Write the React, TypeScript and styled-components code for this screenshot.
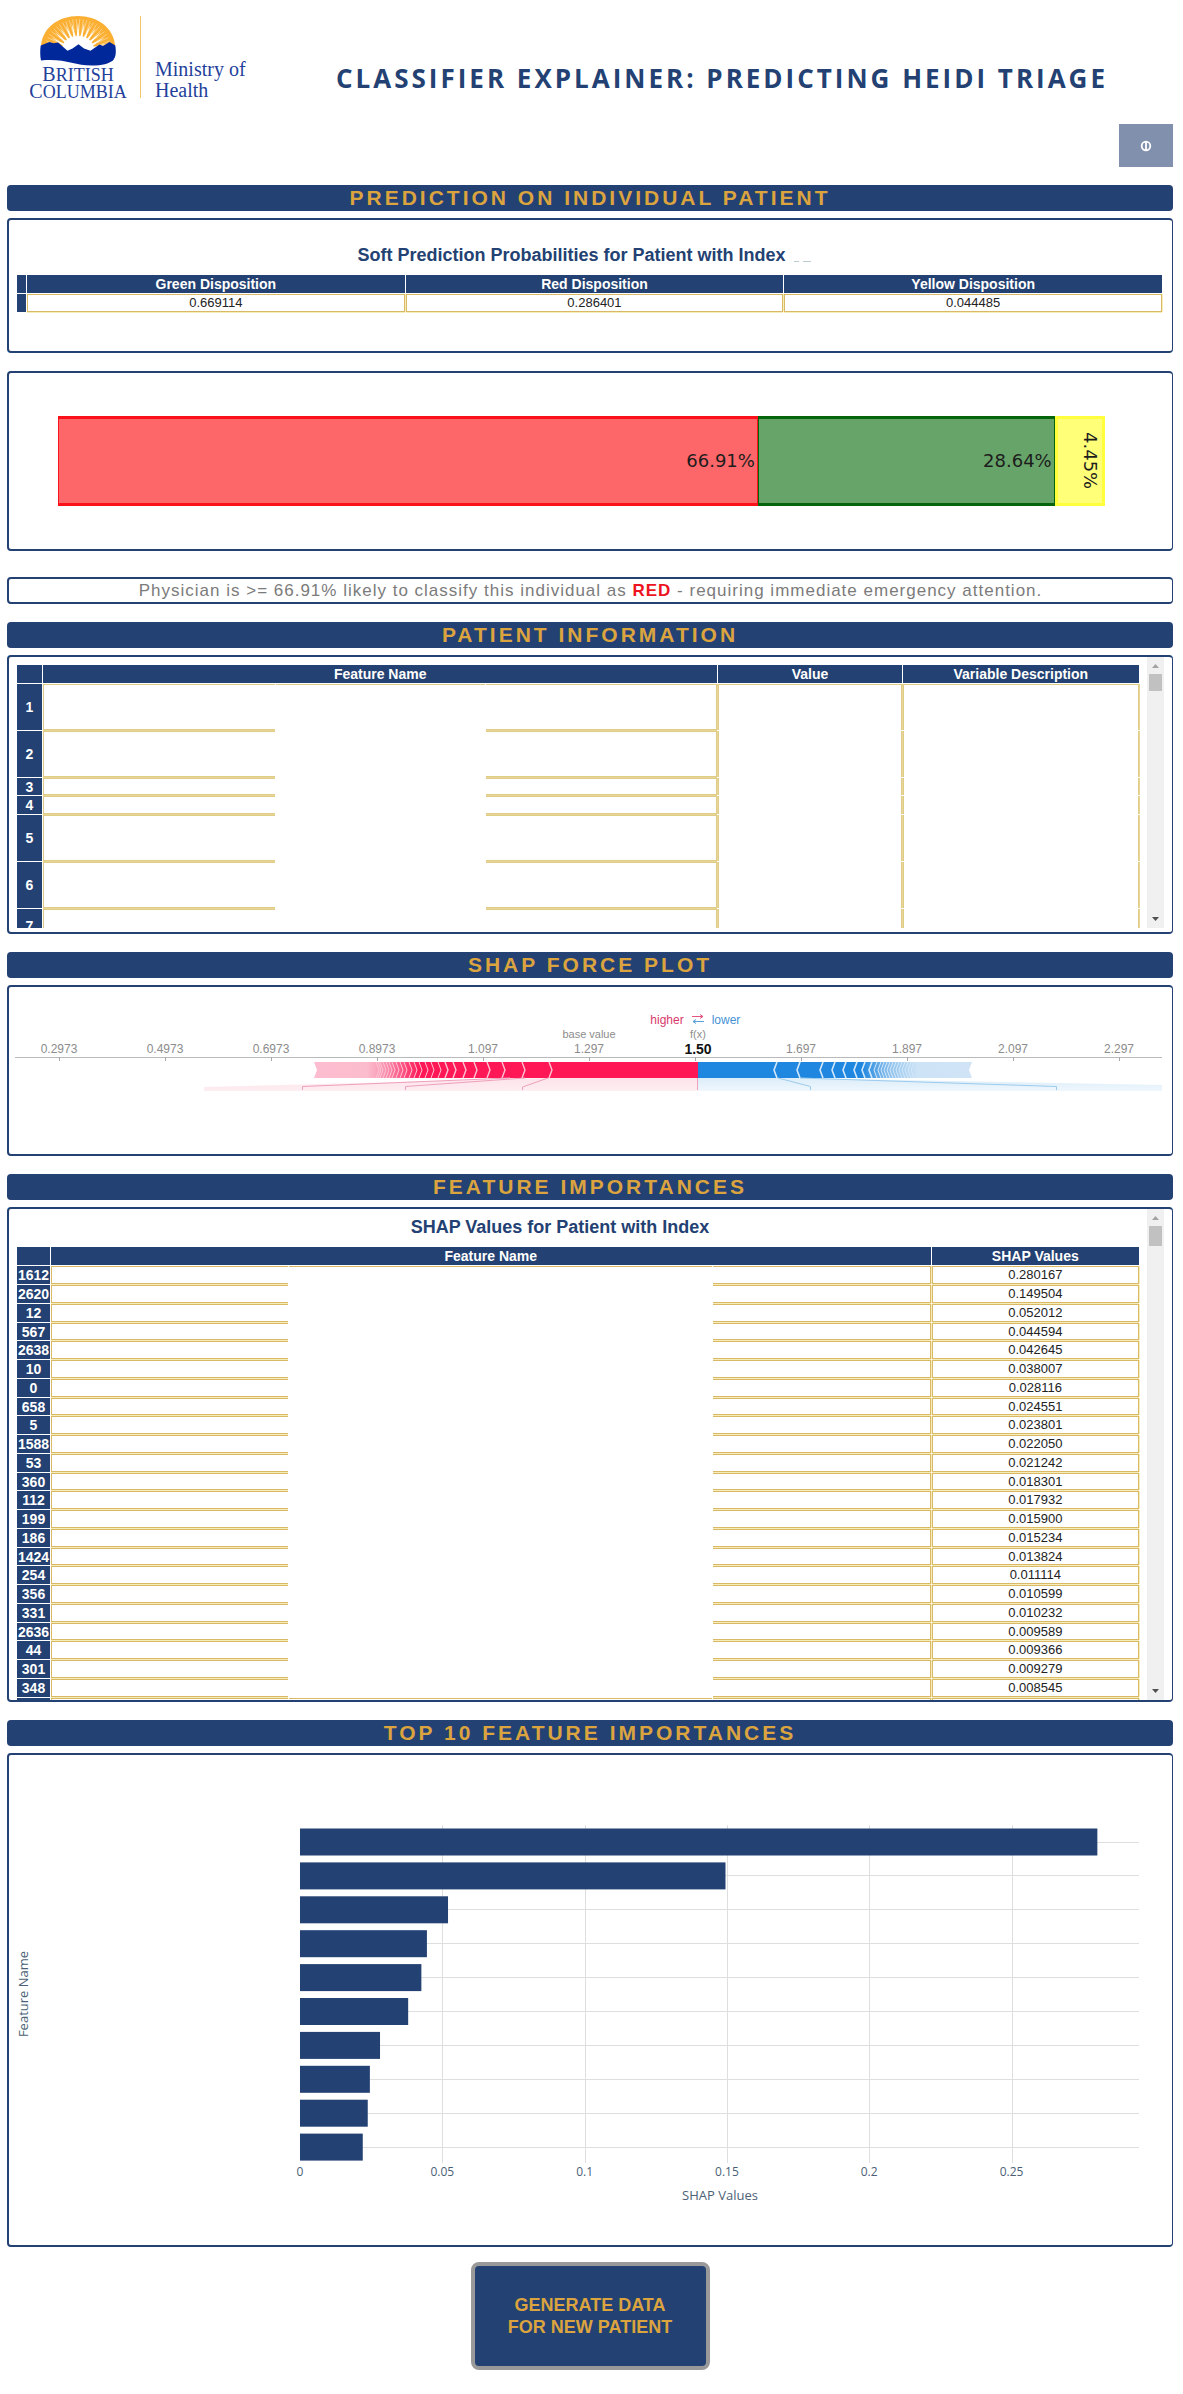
import React from "react";
import styled, { createGlobalStyle } from "styled-components";

const navy = "#234172";
const gold = "#dba43f";
const sans = '"Liberation Sans", Arial, sans-serif';
const open = '"Open Sans", sans-serif';

const GlobalStyle = createGlobalStyle`
  *, *::before, *::after { box-sizing: border-box; }
  body { margin: 0; background: #fff; font-family: ${sans}; }
`;

const Page = styled.div`
  padding: 0 10px 24px 7px;
`;

const Header = styled.header`
  display: flex;
  align-items: flex-start;
  height: 124px;
  padding: 16px 65px 0 23px;
`;

const Logo = styled.svg`
  flex: none;
  width: 220px;
  height: 84px;
  overflow: visible;
`;

const Title = styled.h1`
  flex: 1;
  margin: 44px 0 0;
  text-align: right;
  white-space: nowrap;
  color: ${navy};
  font: 700 26px/36px ${open};
  letter-spacing: 3px;
`;

const Toolbar = styled.div`
  display: flex;
  justify-content: flex-end;
  margin-bottom: 18px;
`;

const HelpButton = styled.button`
  display: flex;
  align-items: center;
  justify-content: center;
  width: 54px;
  height: 43px;
  padding: 0;
  border: 0;
  background: #8090ad;
`;

const Section = styled.section`
  display: flex;
  flex-direction: column;
  margin-bottom: 18px;
`;

const Banner = styled.h2`
  margin: 0 0 7px;
  border-radius: 4px;
  background: ${navy};
  color: ${gold};
  text-align: center;
  font: 700 21px/26px ${sans};
  letter-spacing: 3px;
`;

const Panel = styled.div<{ $h?: number; $gap?: number }>`
  display: flex;
  flex-direction: column;
  height: ${(p) => (p.$h ? `${p.$h}px` : "auto")};
  margin-bottom: ${(p) => p.$gap ?? 0}px;
  border: 2px solid ${navy};
  border-right-width: 1px;
  border-radius: 4px;
  background: #fff;
`;

const TablePanel = styled(Panel)`
  padding: 0 9px 0 7px;
`;

const ScrollPanel = styled(Panel)<{ $bottom: number }>`
  flex-direction: row;
  padding: 0 8px ${(p) => p.$bottom}px 7px;
`;

const ScrollBody = styled.div<{ $top: number }>`
  flex: 1;
  overflow: hidden;
  padding-top: ${(p) => p.$top}px;
  margin-right: 7px;
`;

const TableTitle = styled.h3<{ $top: number; $bottom: number }>`
  display: flex;
  justify-content: center;
  gap: 8px;
  margin: 0;
  padding: ${(p) => p.$top}px 0 ${(p) => p.$bottom}px;
  color: ${navy};
  font: 700 18px/20px ${sans};
`;

const IndexSlot = styled.span`
  display: flex;
  align-items: flex-end;
  gap: 4px;
  width: 28px;
  padding-bottom: 3px;
`;

const Dash = styled.i<{ $w: number }>`
  width: ${(p) => p.$w}px;
  height: 1px;
  background: #bccad2;
`;

const Table = styled.table<{ $rule?: string; $gap?: string }>`
  --rule: ${(p) => p.$rule ?? "#d9b866"};
  --gap: ${(p) => p.$gap ?? "#f6edbb"};
  width: 100%;
  table-layout: fixed;
  border-collapse: separate;
  border-spacing: 1px;
  font-family: ${sans};
`;

const Col = styled.col<{ $w?: string }>`
  width: ${(p) => p.$w ?? "auto"};
`;

const Head = styled.th`
  height: 18px;
  padding: 0;
  background: ${navy};
  color: #fff;
  text-align: center;
  font: 700 14px/18px ${sans};
`;

const Row = styled.tr<{ $h: number }>`
  height: ${(p) => p.$h}px;
`;

const Index = styled.th`
  padding: 0;
  background: ${navy};
  color: #fff;
  text-align: center;
  font: 700 14px/14px ${sans};
`;

const Cell = styled.td`
  padding: 0;
  border: 1px solid var(--rule);
  box-shadow: 0 1px 0 var(--gap), 1px 0 0 var(--gap);
  color: #222;
  text-align: center;
  font: 400 13px/14px ${sans};
`;

const Start = styled(Cell)`
  border-right: 0;
  box-shadow: 0 1px 0 var(--gap);
`;

const Blank = styled.td<{ $first?: boolean }>`
  padding: 0;
  border-top: ${(p) => (p.$first ? "1px solid var(--rule)" : "0")};
`;

const End = styled(Cell)`
  border-left: 0;
`;

const Side = styled(Cell)<{ $first?: boolean }>`
  border-bottom: 0;
  border-top-width: ${(p) => (p.$first ? 1 : 0)}px;
  box-shadow: 1px 0 0 var(--gap);
`;

const Bar = styled.div`
  display: flex;
  flex-direction: column;
  align-items: center;
  justify-content: space-between;
  width: 17px;
  padding: 7px 0;
  background: #f0f0f0;
`;

const BarTop = styled.div`
  display: flex;
  flex-direction: column;
  align-items: center;
  gap: 6px;
`;

const Arrow = styled.svg`
  display: block;
  width: 7px;
  height: 4px;
`;

const Thumb = styled.div<{ $h: number }>`
  width: 13px;
  height: ${(p) => p.$h}px;
  background: #c1c1c1;
`;

const Stack = styled.div`
  display: flex;
  flex: 1;
  margin: 43px 67px 43px 49px;
`;

const Segment = styled.div<{ $share: number; $fill: string; $edge: string; $x: number }>`
  display: flex;
  flex: ${(p) => p.$share} 1 0;
  align-items: center;
  justify-content: flex-end;
  padding-right: 2px;
  border: solid ${(p) => p.$edge};
  border-width: 3px ${(p) => p.$x}px;
  background: ${(p) => p.$fill};
  color: #1d1d1d;
  font: 400 18px/20px "DejaVu Sans", sans-serif;
`;

const Vertical = styled.span`
  writing-mode: vertical-rl;
`;

const Verdict = styled.p`
  margin: 0;
  padding-top: 1px;
  color: #7b7b7b;
  text-align: center;
  font: 400 17px/22px ${sans};
  letter-spacing: 1px;
`;

const Red = styled.strong`
  color: #ee1320;
`;

const Chart = styled.svg`
  display: block;
  width: 100%;
  height: auto;
`;

const Actions = styled.div`
  display: flex;
  justify-content: center;
  margin-top: -3px;
`;

const Generate = styled.button`
  width: 239px;
  height: 108px;
  border: 4px solid #999;
  border-radius: 8px;
  background: ${navy};
  color: ${gold};
  font: 700 18px/22px ${sans};
`;

const ray = (deg: number, r: number) => {
  const a = (deg * Math.PI) / 180;
  return `${(48 + r * Math.cos(a)).toFixed(1)} ${(37 - r * Math.sin(a)).toFixed(1)}`;
};

function BCLogo() {
  const rays = Array.from({ length: 15 }, (_, i) => 6 + i * 12);
  return (
    <Logo viewBox="0 0 220 84" role="img" aria-label="British Columbia Ministry of Health">
      <path d="M11 29C13 11 29 0 48 0s35 11 37 29L64 34H31Z" fill="#fbb034" />
      {rays.map((d) => (
        <path
          key={d}
          d={`M${ray(d - 4.5, 16)}L${ray(d, 31)}L${ray(d + 4.5, 16)}Z`}
          fill="#fff"
        />
      ))}
      {rays.map((d) => (
        <path
          key={d}
          d={`M${ray(d - 2, 22)}L${ray(d - 3, 34)}M${ray(d + 2, 22)}L${ray(d + 3, 34)}`}
          stroke="#fff"
          strokeWidth="0.4"
        />
      ))}
      <path d="M31 37C32 25 39 20 48 20s16 5 17 17Z" fill="#fff" />
      <path
        d="M10.700 29.500L19.500 26 23.500 27.300 28 26.500 37.500 34.700 42.500 32.500 48.500 28.300 54 32.500 60.500 34.700 69.500 28.500 73 30 79.500 26 85.300 29.500C86.300 36 86 41 83 44.500 79 47.500 72 49.500 62 49.500 44 49.500 34 42 11 44.500 10 40 10 34 10.700 29.500Z"
        fill="#00289b"
      />
      <g fill="#233f9b" fontFamily='"Liberation Serif", serif' textAnchor="middle">
        <text x="48" y="65" fontSize="20">B<tspan fontSize="18">RITISH</tspan></text>
        <text x="48" y="82" fontSize="20">C<tspan fontSize="18">OLUMBIA</tspan></text>
      </g>
      <path d="M110.500 0V82" stroke="#f3c566" strokeWidth="1" />
      <g fill="#233f9b" fontFamily='"Liberation Serif", serif' fontSize="20">
        <text x="125" y="60">Ministry of</text>
        <text x="125" y="81">Health</text>
      </g>
    </Logo>
  );
}

function Scrollbar({ thumb }: { thumb: number }) {
  return (
    <Bar aria-hidden="true">
      <BarTop>
        <Arrow viewBox="0 0 7 4"><path d="M0 4L3.500 0 7 4Z" fill="#a3a3a3" /></Arrow>
        <Thumb $h={thumb} />
      </BarTop>
      <Arrow viewBox="0 0 7 4"><path d="M0 0L3.500 4 7 0Z" fill="#505050" /></Arrow>
    </Bar>
  );
}

const patientRows = [46, 46, 17, 18, 46, 46, 34];

const shapRows: [string, string][] = [
  ["1612", "0.280167"], ["2620", "0.149504"], ["12", "0.052012"], ["567", "0.044594"],
  ["2638", "0.042645"], ["10", "0.038007"], ["0", "0.028116"], ["658", "0.024551"],
  ["5", "0.023801"], ["1588", "0.022050"], ["53", "0.021242"], ["360", "0.018301"],
  ["112", "0.017932"], ["199", "0.015900"], ["186", "0.015234"], ["1424", "0.013824"],
  ["254", "0.011114"], ["356", "0.010599"], ["331", "0.010232"], ["2636", "0.009589"],
  ["44", "0.009366"], ["301", "0.009279"], ["348", "0.008545"],
];

const ticks = ["0.2973", "0.4973", "0.6973", "0.8973", "1.097", "1.297", "", "1.697", "1.897", "2.097", "2.297"];
const redTips = [552, 525, 505, 490, 477, 466, 456, 448, 441, 434, 428, 422, 417, 412, 407, 403, 399, 395, 392, 389, 386, 383, 381, 379];
const blueTips = [773, 796, 819, 831, 842, 853, 861, 868, 873, 877, 880, 883, 886, 889, 892, 895, 898, 901, 904, 907, 910];

function ForcePlot() {
  return (
    <Chart viewBox="9 987 1163 167" role="img" aria-label="SHAP force plot">
      <defs>
        <linearGradient id="redBar" gradientUnits="userSpaceOnUse" x1="314" x2="420" y1="0" y2="0">
          <stop offset="0" stopColor="#fdbdd0" />
          <stop offset="0.5" stopColor="#fbbccd" />
          <stop offset="0.68" stopColor="#f98fae" />
          <stop offset="1" stopColor="#ff1756" />
        </linearGradient>
        <linearGradient id="blueBar" gradientUnits="userSpaceOnUse" x1="862" x2="972" y1="0" y2="0">
          <stop offset="0" stopColor="#1f87e0" />
          <stop offset="0.25" stopColor="#8fc1ec" />
          <stop offset="0.5" stopColor="#cde3f6" />
          <stop offset="1" stopColor="#d0e4f6" />
        </linearGradient>
        <linearGradient id="redFade" x1="0" x2="0" y1="0" y2="1">
          <stop offset="0" stopColor="#fde3ea" />
          <stop offset="1" stopColor="#fdeef2" />
        </linearGradient>
        <linearGradient id="blueFade" x1="0" x2="0" y1="0" y2="1">
          <stop offset="0" stopColor="#dcedf9" />
          <stop offset="1" stopColor="#eff7fd" />
        </linearGradient>
      </defs>
      <g fontFamily={sans} fontSize="12" textAnchor="middle" fill="#8c8c8c">
        <text x="667" y="1024" fill="#d9386b" fontSize="12">higher</text>
        <text x="726" y="1024" fill="#4592d4" fontSize="12">lower</text>
        <text x="589" y="1038" fontSize="11">base value</text>
        <text x="698" y="1038" fontSize="11">f(x)</text>
        {ticks.map((t, i) => (
          <text key={i} x={59 + i * 106} y="1053">{t}</text>
        ))}
        <text x="698" y="1054" fill="#111" fontSize="14" fontWeight="700">1.50</text>
      </g>
      <path d="M692 1016.500H703M700 1014.500L703 1016.500 700 1018.500" stroke="#e2557f" fill="none" />
      <path d="M704 1021.500H693M696 1019.500L693 1021.500 696 1023.500" stroke="#5ba0d8" fill="none" />
      <path d="M15 1057.500H1162" stroke="#b9b9b9" />
      {ticks.map((_, i) => (
        <path key={i} d={`M${59.5 + i * 106} 1057V1061`} stroke="#aaa" />
      ))}
      <path d="M204 1087L545 1078H698V1091H204Z" fill="url(#redFade)" />
      <path d="M698 1078H790L1162 1085V1091H698Z" fill="url(#blueFade)" />
      <path d="M314 1062H698V1078H314L317 1070Z" fill="url(#redBar)" />
      <path d="M698 1062H972L969 1070 972 1078H698Z" fill="url(#blueBar)" />
      <g fill="none" stroke="#fdc3d3">
        {redTips.map((x, i) => (
          <path key={x} d={`M${x - 3} 1062L${x} 1070L${x - 3} 1078`} strokeWidth={i < 8 ? 1.4 : 1} />
        ))}
      </g>
      <g fill="none" stroke="#d3e8fa">
        {blueTips.map((x, i) => (
          <path key={x} d={`M${x + 4} 1062L${x + 1} 1070L${x + 4} 1078`} strokeWidth={i < 8 ? 1.6 : 1} />
        ))}
      </g>
      <g fill="none" stroke="#efa0bb" strokeWidth="1">
        <path d="M510 1078L302.500 1086.500V1090" />
        <path d="M525 1078L405.500 1086.500V1090" />
        <path d="M548 1078L522.500 1087V1090" />
        <path d="M697.500 1078V1090" />
      </g>
      <g fill="none" stroke="#9bcbec" strokeWidth="1">
        <path d="M778 1078L810.500 1086.500V1090" />
        <path d="M800 1078L1056.500 1086.500V1090" />
      </g>
    </Chart>
  );
}

const top10 = [0.280167, 0.149504, 0.052012, 0.044594, 0.042645, 0.038007, 0.028116, 0.024551, 0.023801, 0.02205];

function ImportanceChart() {
  const scale = 2846;
  const y = (i: number) => 1828.5 + i * 33.9;
  return (
    <Chart viewBox="9 1755 1163 490" role="img" aria-label="Top 10 feature importances">
      <g stroke="#dedede">
        {[0.05, 0.1, 0.15, 0.2, 0.25].map((v) => (
          <path key={v} d={`M${Math.round(300 + v * scale) + 0.5} 1825V2163`} />
        ))}
        {top10.map((v, i) => (
          <path key={v} d={`M300 ${Math.round(y(i) + 13) + 0.5}H1139`} />
        ))}
      </g>
      {top10.map((v, i) => (
        <rect key={v} x="300" y={y(i)} width={v * scale} height="27" fill={navy} />
      ))}
      <g fontFamily={open} fill="#4b5f76" textAnchor="middle">
        {["0", "0.05", "0.1", "0.15", "0.2", "0.25"].map((t) => (
          <text key={t} x={300 + Number(t) * scale} y="2176" fontSize="12">{t}</text>
        ))}
        <text x="720" y="2200" fontSize="13">SHAP Values</text>
        <text transform="translate(28 1994) rotate(-90)" fontSize="13">Feature Name</text>
      </g>
    </Chart>
  );
}

export default function App() {
  return (
    <Page>
      <GlobalStyle />
      <Header>
        <BCLogo />
        <Title>CLASSIFIER EXPLAINER: PREDICTING HEIDI TRIAGE</Title>
      </Header>
      <Toolbar>
        <HelpButton type="button" aria-label="Information">
          <svg width="12" height="12" viewBox="0 0 12 12" fill="none" stroke="#fff" strokeWidth="1.800">
            <circle cx="6" cy="6" r="4.300" />
            <path d="M6 2V10" />
          </svg>
        </HelpButton>
      </Toolbar>

      <Section>
        <Banner>PREDICTION ON INDIVIDUAL PATIENT</Banner>
        <TablePanel $h={135} $gap={18}>
          <TableTitle $top={25} $bottom={9}>
            Soft Prediction Probabilities for Patient with Index
            <IndexSlot><Dash $w={5} /><Dash $w={8} /></IndexSlot>
          </TableTitle>
          <Table>
            <colgroup><Col $w="9px" /><Col /><Col /><Col /></colgroup>
            <thead>
              <tr>
                <Head />
                <Head scope="col">Green Disposition</Head>
                <Head scope="col">Red Disposition</Head>
                <Head scope="col">Yellow Disposition</Head>
              </tr>
            </thead>
            <tbody>
              <Row $h={18}>
                <Index />
                <Cell>0.669114</Cell>
                <Cell>0.286401</Cell>
                <Cell>0.044485</Cell>
              </Row>
            </tbody>
          </Table>
        </TablePanel>
        <Panel $h={180} $gap={26}>
          <Stack>
            <Segment $share={675} $fill="#fe6769" $edge="#fb1119" $x={1}>66.91%</Segment>
            <Segment $share={284} $fill="#67a469" $edge="#04650d" $x={1}>28.64%</Segment>
            <Segment $share={41} $fill="#ffff78" $edge="#ffff3d" $x={3}><Vertical>4.45%</Vertical></Segment>
          </Stack>
        </Panel>
        <Panel>
          <Verdict>
            Physician is &gt;= 66.91% likely to classify this individual as <Red>RED</Red> - requiring immediate emergency attention.
          </Verdict>
        </Panel>
      </Section>

      <Section>
        <Banner>PATIENT INFORMATION</Banner>
        <ScrollPanel $h={279} $bottom={4}>
          <ScrollBody $top={7}>
            <Table $rule="#e0cc88" $gap="#e6d795">
              <colgroup>
                <Col $w="25px" /><Col $w="20.8%" /><Col $w="18.7%" /><Col $w="20.7%" /><Col $w="16.4%" /><Col />
              </colgroup>
              <thead>
                <tr>
                  <Head />
                  <Head scope="col" colSpan={3}>Feature Name</Head>
                  <Head scope="col">Value</Head>
                  <Head scope="col">Variable Description</Head>
                </tr>
              </thead>
              <tbody>
                {patientRows.map((h, i) => (
                  <Row key={i} $h={h}>
                    <Index scope="row">{i + 1}</Index>
                    <Start />
                    <Blank $first={i === 0} />
                    <End />
                    <Side $first={i === 0} />
                    <Side $first={i === 0} />
                  </Row>
                ))}
              </tbody>
            </Table>
          </ScrollBody>
          <Scrollbar thumb={17} />
        </ScrollPanel>
      </Section>

      <Section>
        <Banner>SHAP FORCE PLOT</Banner>
        <Panel><ForcePlot /></Panel>
      </Section>

      <Section>
        <Banner>FEATURE IMPORTANCES</Banner>
        <ScrollPanel $h={495} $bottom={0}>
          <ScrollBody $top={0}>
            <TableTitle $top={8} $bottom={9}>
              SHAP Values for Patient with Index
              <IndexSlot />
            </TableTitle>
            <Table>
              <colgroup>
                <Col $w="33px" /><Col $w="21.2%" /><Col $w="37.8%" /><Col $w="19.5%" /><Col />
              </colgroup>
              <thead>
                <tr>
                  <Head />
                  <Head scope="col" colSpan={3}>Feature Name</Head>
                  <Head scope="col">SHAP Values</Head>
                </tr>
              </thead>
              <tbody>
                {shapRows.map(([id, value], i) => (
                  <Row key={id} $h={i % 4 === 3 ? 17 : 18}>
                    <Index scope="row">{id}</Index>
                    <Start />
                    <Blank $first={i === 0} />
                    <End />
                    <Cell>{value}</Cell>
                  </Row>
                ))}
                <Row $h={18}>
                  <Index />
                  <Start />
                  <Blank $first />
                  <End />
                  <Cell />
                </Row>
              </tbody>
            </Table>
          </ScrollBody>
          <Scrollbar thumb={20} />
        </ScrollPanel>
      </Section>

      <Section>
        <Banner>TOP 10 FEATURE IMPORTANCES</Banner>
        <Panel><ImportanceChart /></Panel>
      </Section>

      <Actions>
        <Generate type="button">GENERATE DATA<br />FOR NEW PATIENT</Generate>
      </Actions>
    </Page>
  );
}
